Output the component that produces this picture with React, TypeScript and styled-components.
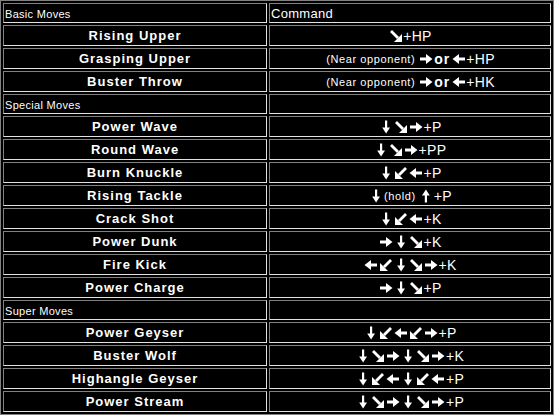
import styled, { createGlobalStyle } from "styled-components"

const GlobalStyle = createGlobalStyle`
  html, body {
    margin: 0;
    padding: 0;
    background: #000;
  }
`

type Move = { name: string; command: string }
type Section = { title: string; moves: Move[] }

const sections: Section[] = [
  {
    title: "Basic Moves",
    moves: [
      { name: "Rising Upper", command: "↘+HP" },
      { name: "Grasping Upper", command: "(Near opponent) →or←+HP" },
      { name: "Buster Throw", command: "(Near opponent) →or←+HK" },
    ],
  },
  {
    title: "Special Moves",
    moves: [
      { name: "Power Wave", command: "↓↘→+P" },
      { name: "Round Wave", command: "↓↘→+PP" },
      { name: "Burn Knuckle", command: "↓↙←+P" },
      { name: "Rising Tackle", command: "↓(hold)↑+P" },
      { name: "Crack Shot", command: "↓↙←+K" },
      { name: "Power Dunk", command: "→↓↘+K" },
      { name: "Fire Kick", command: "←↙↓↘→+K" },
      { name: "Power Charge", command: "→↓↘+P" },
    ],
  },
  {
    title: "Super Moves",
    moves: [
      { name: "Power Geyser", command: "↓↙←↙→+P" },
      { name: "Buster Wolf", command: "↓↘→↓↘→+K" },
      { name: "Highangle Geyser", command: "↓↙←↓↙←+P" },
      { name: "Power Stream", command: "↓↘→↓↘→+P" },
    ],
  },
]

const Table = styled.table`
  width: 554px;
  table-layout: fixed;
  border-collapse: separate;
  border-spacing: 2px;
  border: 1px solid #808080;
  background: #000;
  color: #fff;
`

const Cell = styled.td<{ $head?: boolean; $wide?: boolean }>`
  box-sizing: border-box;
  width: ${(p) => (p.$wide ? "282px" : "264px")};
  height: ${(p) => (p.$head ? "20px" : "21px")};
  padding: 0 1px;
  border-style: solid;
  border-width: 1px;
  border-color: #808080 #e2e2e2 #e2e2e2 #808080;
  line-height: 16px;
  white-space: nowrap;
  overflow: hidden;
  vertical-align: middle;
`

const SectionLabel = styled.span`
  font-family: "Liberation Sans", Arial, sans-serif;
  font-size: 11px;
  letter-spacing: 0.3px;
`

const CommandLabel = styled.span`
  font-family: "Liberation Sans", Arial, sans-serif;
  font-size: 13px;
  letter-spacing: 0.3px;
`

const MoveName = styled.div`
  text-align: center;
  font-family: "Liberation Sans", Arial, sans-serif;
  font-weight: 700;
  font-size: 13px;
  letter-spacing: 1px;
`

const Command = styled.div`
  display: flex;
  justify-content: center;
  align-items: center;
  font-family: "Liberation Sans", Arial, sans-serif;
  font-size: 14px;
`

const ArrowIcon = styled.svg`
  display: block;
  width: 14px;
  height: 14px;
  margin: 0 0.5px;
  fill: #fff;
`

const Note = styled.span`
  font-size: 11px;
  letter-spacing: 0.6px;
  margin: 0 3px 0 1px;
`

const Or = styled.span`
  font-weight: 700;
  letter-spacing: 1px;
  margin: 0 1px;
`

const Key = styled.span`
  letter-spacing: 0.3px;
`

// base shapes: "h" points right, "v" points down, "d" points down-right
const arrowShape: Record<string, { shape: "h" | "v" | "d"; t?: string }> = {
  "→": { shape: "h" },
  "←": { shape: "h", t: "rotate(180 7 7)" },
  "↓": { shape: "v" },
  "↑": { shape: "v", t: "rotate(180 7 7)" },
  "↘": { shape: "d" },
  "↙": { shape: "d", t: "translate(14 0) scale(-1 1)" },
}

function Arrow({ dir }: { dir: string }) {
  const a = arrowShape[dir]
  return (
    <ArrowIcon viewBox="0 0 14 14" role="img" aria-label={dir}>
      <g transform={a.t}>
        {a.shape === "h" && (
          <>
            <rect x="1" y="5.5" width="7" height="3" />
            <polygon points="7,2 13.5,7 7,12" />
          </>
        )}
        {a.shape === "v" && (
          <>
            <rect x="6" y="0.5" width="2.2" height="8" />
            <polygon points="3.2,7.5 11,7.5 7.1,13.5" />
          </>
        )}
        {a.shape === "d" && (
          <>
            <polygon points="1,3 3,1 10,8 8,10" />
            <polygon points="13,5 13,13 5,13" />
          </>
        )}
      </g>
    </ArrowIcon>
  )
}

const tokenRe = /(\([^)]*\))|([←→↑↓↘↙])|(or)|([^←→↑↓↘↙(]+)/g

function CommandText({ text }: { text: string }) {
  const parts = Array.from(text.matchAll(tokenRe))
  return (
    <Command>
      {parts.map((m, i) => {
        if (m[1]) return <Note key={i}>{m[1]}</Note>
        if (m[2]) return <Arrow key={i} dir={m[2]} />
        if (m[3]) return <Or key={i}>{m[3]}</Or>
        const t = m[4].trim()
        return t ? <Key key={i}>{t}</Key> : null
      })}
    </Command>
  )
}

function SectionRows({ section, first }: { section: Section; first: boolean }) {
  return (
    <>
      <tr>
        <Cell $head>
          <SectionLabel>{section.title}</SectionLabel>
        </Cell>
        <Cell $head $wide>
          {first && <CommandLabel>Command</CommandLabel>}
        </Cell>
      </tr>
      {section.moves.map((m) => (
        <tr key={m.name}>
          <Cell>
            <MoveName>{m.name}</MoveName>
          </Cell>
          <Cell $wide>
            <CommandText text={m.command} />
          </Cell>
        </tr>
      ))}
    </>
  )
}

function App() {
  return (
    <>
      <GlobalStyle />
      <Table>
        <tbody>
          {sections.map((s, si) => (
            <SectionRows key={s.title} section={s} first={si === 0} />
          ))}
        </tbody>
      </Table>
    </>
  )
}

export default App
